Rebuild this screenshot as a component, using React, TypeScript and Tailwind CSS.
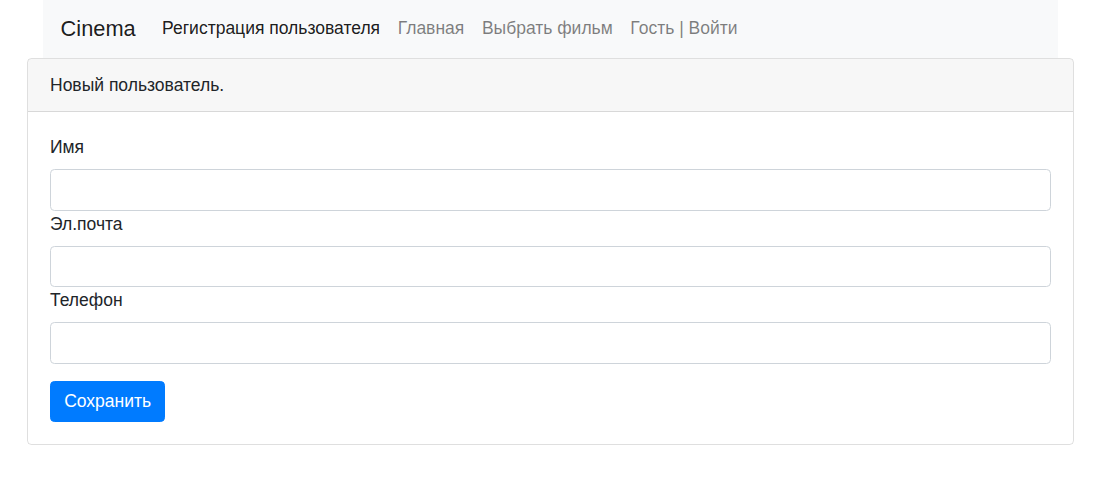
export default function App() {
  const font = { fontFamily: '"Liberation Sans", Arial, sans-serif' };
  return (
    <div className="bg-white min-h-[478px] text-[17.5px] leading-[26px] text-[#212529]" style={font}>
      <nav className="ml-[43px] w-[1015px] h-[58px] bg-[#f8f9fa] flex items-center px-[17.6px] pb-[2px]">
        <span className="text-[21.8px] leading-[33px] text-[rgba(0,0,0,0.9)] mr-[17.6px]">Cinema</span>
        <div className="flex items-center">
          <span className="px-[8.8px] text-[rgba(0,0,0,0.9)]">Регистрация пользователя</span>
          <span className="px-[8.8px] text-[rgba(0,0,0,0.5)]">Главная</span>
          <span className="px-[8.8px] text-[rgba(0,0,0,0.5)]">Выбрать фильм</span>
          <span className="px-[8.8px] text-[rgba(0,0,0,0.5)]">Гость | Войти</span>
        </div>
      </nav>
      <div className="ml-[27px] w-[1047px] border border-[rgba(0,0,0,0.125)] rounded-[4.4px] overflow-hidden">
        <div className="bg-[rgba(0,0,0,0.03)] border-b border-[rgba(0,0,0,0.125)] px-[22px] py-[13px]">
          Новый пользователь.
        </div>
        <div className="p-[22px] flex flex-col">
          <label className="mb-[9px]">Имя</label>
          <input className="h-[41.5px] w-full border border-[#ced4da] rounded-[4.4px] bg-white outline-none" />
          <label className="mb-[9px]">Эл.почта</label>
          <input className="h-[41.5px] w-full border border-[#ced4da] rounded-[4.4px] bg-white outline-none" />
          <label className="mb-[9px]">Телефон</label>
          <input className="h-[41.5px] w-full border border-[#ced4da] rounded-[4.4px] bg-white outline-none" />
          <div className="mt-[17px]">
            <button className="bg-[#007bff] text-white rounded-[4.4px] px-[13.2px] h-[41.5px] border border-[#007bff] leading-[26px]">
              Сохранить
            </button>
          </div>
        </div>
      </div>
    </div>
  );
}
